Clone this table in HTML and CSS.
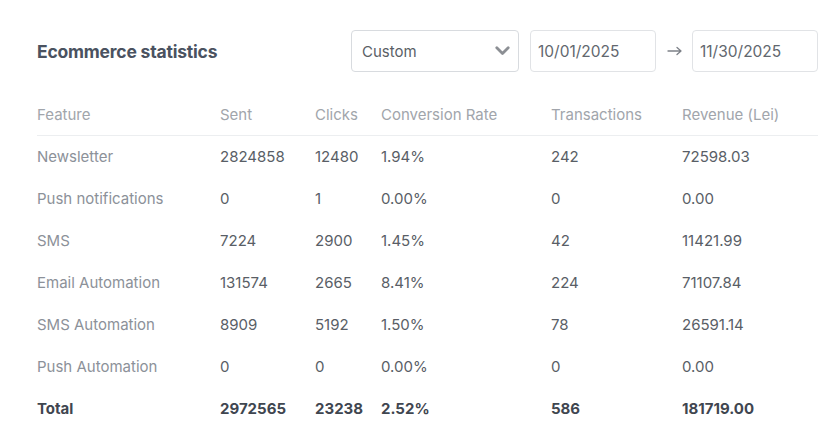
FILE: index.html
```html
<!DOCTYPE html>
<html>
<head>
<meta charset="utf-8">
<link rel="stylesheet" href="styles.css">
</head>
<body>
<div class="card">
  <div class="topbar">
    <h2 class="title">Ecommerce statistics</h2>
    <div class="controls">
      <div class="select">
        <span>Custom</span>
        <svg class="chev" width="15" height="10" viewBox="0 0 15 10"><path d="M1.8 1.8 L7.5 7.5 L13.2 1.8" fill="none" stroke="#8c8f94" stroke-width="2.8" stroke-linecap="round" stroke-linejoin="round"/></svg>
      </div>
      <div class="date">10/01/2025</div>
      <svg class="arrow" width="16" height="10" viewBox="0 0 16 10"><path d="M1 5 H14 M10 1.5 L14 5 L10 8.5" fill="none" stroke="#7d8188" stroke-width="1.3" stroke-linecap="round" stroke-linejoin="round"/></svg>
      <div class="date">11/30/2025</div>
    </div>
  </div>
  <table class="stats">
    <colgroup>
      <col class="c1"><col class="c2"><col class="c3"><col class="c4"><col class="c5"><col class="c6">
    </colgroup>
    <thead>
      <tr><th>Feature</th><th>Sent</th><th>Clicks</th><th>Conversion Rate</th><th>Transactions</th><th>Revenue (Lei)</th></tr>
    </thead>
    <tbody>
      <tr><td class="name">Newsletter</td><td>2824858</td><td>12480</td><td>1.94%</td><td>242</td><td>72598.03</td></tr>
      <tr><td class="name">Push notifications</td><td>0</td><td>1</td><td>0.00%</td><td>0</td><td>0.00</td></tr>
      <tr><td class="name">SMS</td><td>7224</td><td>2900</td><td>1.45%</td><td>42</td><td>11421.99</td></tr>
      <tr><td class="name">Email Automation</td><td>131574</td><td>2665</td><td>8.41%</td><td>224</td><td>71107.84</td></tr>
      <tr><td class="name">SMS Automation</td><td>8909</td><td>5192</td><td>1.50%</td><td>78</td><td>26591.14</td></tr>
      <tr><td class="name">Push Automation</td><td>0</td><td>0</td><td>0.00%</td><td>0</td><td>0.00</td></tr>
      <tr class="total"><td>Total</td><td>2972565</td><td>23238</td><td>2.52%</td><td>586</td><td>181719.00</td></tr>
    </tbody>
  </table>
</div>
</body>
</html>
```

FILE: styles.css
```css
* { box-sizing: border-box; }
html, body { margin: 0; padding: 0; background: #ffffff; }
body {
  font-family: "Inter", "Lato", sans-serif;
  color: #555b64;
  font-size: 15px;
}
.card {
  padding: 30px 17px 0 37px;
}
.topbar {
  display: flex;
  align-items: center;
  justify-content: space-between;
  height: 42px;
}
.title {
  margin: 0;
  font-size: 17.5px;
  font-weight: 700;
  color: #4a5260;
  letter-spacing: -0.2px;
}
.controls {
  display: flex;
  align-items: center;
}
.select {
  width: 168px;
  height: 42px;
  border: 1px solid #d8dbdf;
  border-radius: 4px;
  display: flex;
  align-items: center;
  justify-content: space-between;
  padding: 0 8px 0 10px;
  color: #5a5f66;
  font-size: 15px;
}
.chev { display: block; }
.date {
  width: 126px;
  height: 42px;
  border: 1px solid #e1e3e6;
  border-radius: 4px;
  display: flex;
  align-items: center;
  padding: 0 7px;
  color: #62676e;
  font-size: 15.5px;
}
.select + .date { margin-left: 11px; }
.arrow { margin: 0 9px 0 11px; display: block; }
.stats {
  margin-top: 23px;
  width: 781px;
  border-collapse: collapse;
  table-layout: fixed;
}
.c1 { width: 183px; }
.c2 { width: 95px; }
.c3 { width: 66px; }
.c4 { width: 170px; }
.c5 { width: 131px; }
.c6 { width: 136px; }
th {
  text-align: left;
  font-weight: 400;
  color: #a1a5ab;
  height: 40px;
  padding: 0;
  border-bottom: 1px solid #eceef0;
  font-size: 15px;
}
td {
  padding: 0;
  height: 42px;
  font-size: 15px;
  color: #595e66;
}
td.name { color: #8c9199; }
.total td {
  font-weight: 700;
  color: #3f4650;
}
```
